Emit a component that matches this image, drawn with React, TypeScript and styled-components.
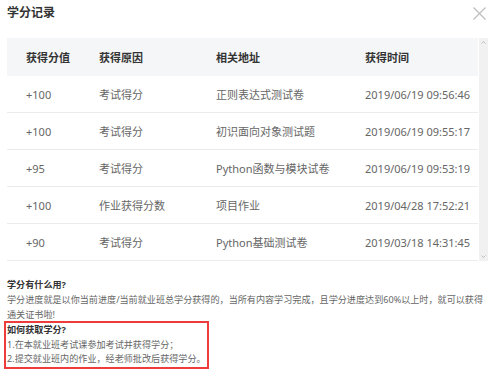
import styled, { createGlobalStyle } from 'styled-components';

const GlobalStyle = createGlobalStyle`
  html, body {
    margin: 0;
    padding: 0;
    background: #fff;
  }
  body {
    font-family: "Noto Sans", "Noto Sans CJK SC", sans-serif;
    color: #333;
  }
`;

const Dialog = styled.div`
  width: 500px;
  height: 388px;
  box-sizing: border-box;
  padding: 0 12px 0 7px;
  display: flex;
  flex-direction: column;
`;

const DialogHeader = styled.div`
  height: 26px;
  margin-bottom: 12px;
  display: flex;
  align-items: center;
  justify-content: space-between;
`;

const Title = styled.h3`
  margin: 0;
  font-size: 12px;
  font-weight: 700;
  color: #333;
  line-height: 26px;
`;

const CloseButton = styled.button`
  width: 14px;
  height: 14px;
  margin-right: 2px;
  padding: 0;
  border: 0;
  background: none;
  display: flex;
  align-items: center;
  justify-content: center;
  cursor: pointer;
`;

const TableWrap = styled.div`
  display: flex;
  gap: 1px;
`;

const Table = styled.div`
  flex: 1;
`;

const Row = styled.div<{ $head?: boolean }>`
  display: grid;
  grid-template-columns: 73px 117px 149px 1fr;
  align-items: center;
  box-sizing: border-box;
  height: ${(p) => (p.$head ? '38px' : '37px')};
  background: ${(p) => (p.$head ? '#f5f6f7' : '#fff')};
  border-bottom: ${(p) => (p.$head ? 'none' : '1px solid #ececec')};
  font-size: 11px;
  font-weight: ${(p) => (p.$head ? 700 : 400)};
  color: ${(p) => (p.$head ? '#333' : '#666')};
`;

const Cell = styled.div`
  padding-left: 19px;
  white-space: nowrap;
`;

const Scrollbar = styled.div`
  width: 9px;
  background: #f1f1f1;
  display: flex;
  flex-direction: column;
  justify-content: space-between;
  align-items: center;
  padding: 3px 0;
  box-sizing: border-box;
`;

const Arrow = styled.svg`
  display: block;
`;

const Notes = styled.div`
  margin-top: 16px;
  font-size: 9.1px;
  line-height: 15px;
  color: #666;
`;

const NoteTitle = styled.div`
  font-weight: 700;
  color: #333;
`;

const NoteText = styled.p`
  margin: 0;
`;

const Highlight = styled.div`
  width: fit-content;
  margin: -1px 0 0 -3px;
  padding: 0 1px;
  border: 2px solid #ee3b3b;
  line-height: 14.5px;
`;

const records = [
  { score: '+100', reason: '考试得分', link: '正则表达式测试卷', time: '2019/06/19 09:56:46' },
  { score: '+100', reason: '考试得分', link: '初识面向对象测试题', time: '2019/06/19 09:55:17' },
  { score: '+95', reason: '考试得分', link: 'Python函数与模块试卷', time: '2019/06/19 09:53:19' },
  { score: '+100', reason: '作业获得分数', link: '项目作业', time: '2019/04/28 17:52:21' },
  { score: '+90', reason: '考试得分', link: 'Python基础测试卷', time: '2019/03/18 14:31:45' },
];

export default function App() {
  return (
    <>
      <GlobalStyle />
      <Dialog>
        <DialogHeader>
          <Title>学分记录</Title>
          <CloseButton aria-label="关闭">
            <svg width="13" height="13" viewBox="0 0 13 13">
              <path d="M0.5 0.5 L12.5 12.5 M12.5 0.5 L0.5 12.5" stroke="#bdbdbd" strokeWidth="1.2" />
            </svg>
          </CloseButton>
        </DialogHeader>

        <TableWrap>
          <Table>
            <Row $head>
              <Cell>获得分值</Cell>
              <Cell>获得原因</Cell>
              <Cell>相关地址</Cell>
              <Cell>获得时间</Cell>
            </Row>
            {records.map((r) => (
              <Row key={r.time}>
                <Cell>{r.score}</Cell>
                <Cell>{r.reason}</Cell>
                <Cell>{r.link}</Cell>
                <Cell>{r.time}</Cell>
              </Row>
            ))}
          </Table>
          <Scrollbar>
            <Arrow width="5" height="3" viewBox="0 0 5 3">
              <path d="M0.5 2.5 L2.5 0.5 L4.5 2.5" fill="none" stroke="#b5b5b5" strokeWidth="0.9" />
            </Arrow>
            <Arrow width="5" height="3" viewBox="0 0 5 3">
              <path d="M0.5 0.5 L2.5 2.5 L4.5 0.5" fill="none" stroke="#b5b5b5" strokeWidth="0.9" />
            </Arrow>
          </Scrollbar>
        </TableWrap>

        <Notes>
          <NoteTitle>学分有什么用?</NoteTitle>
          <NoteText>
            学分进度就是以你当前进度/当前就业班总学分获得的，当所有内容学习完成，且学分进度达到60%以上时，就可以获得通关证书啦!
          </NoteText>
          <Highlight>
            <NoteTitle>如何获取学分?</NoteTitle>
            <NoteText>1.在本就业班考试课参加考试并获得学分；</NoteText>
            <NoteText>2.提交就业班内的作业，经老师批改后获得学分。</NoteText>
          </Highlight>
        </Notes>
      </Dialog>
    </>
  );
}
